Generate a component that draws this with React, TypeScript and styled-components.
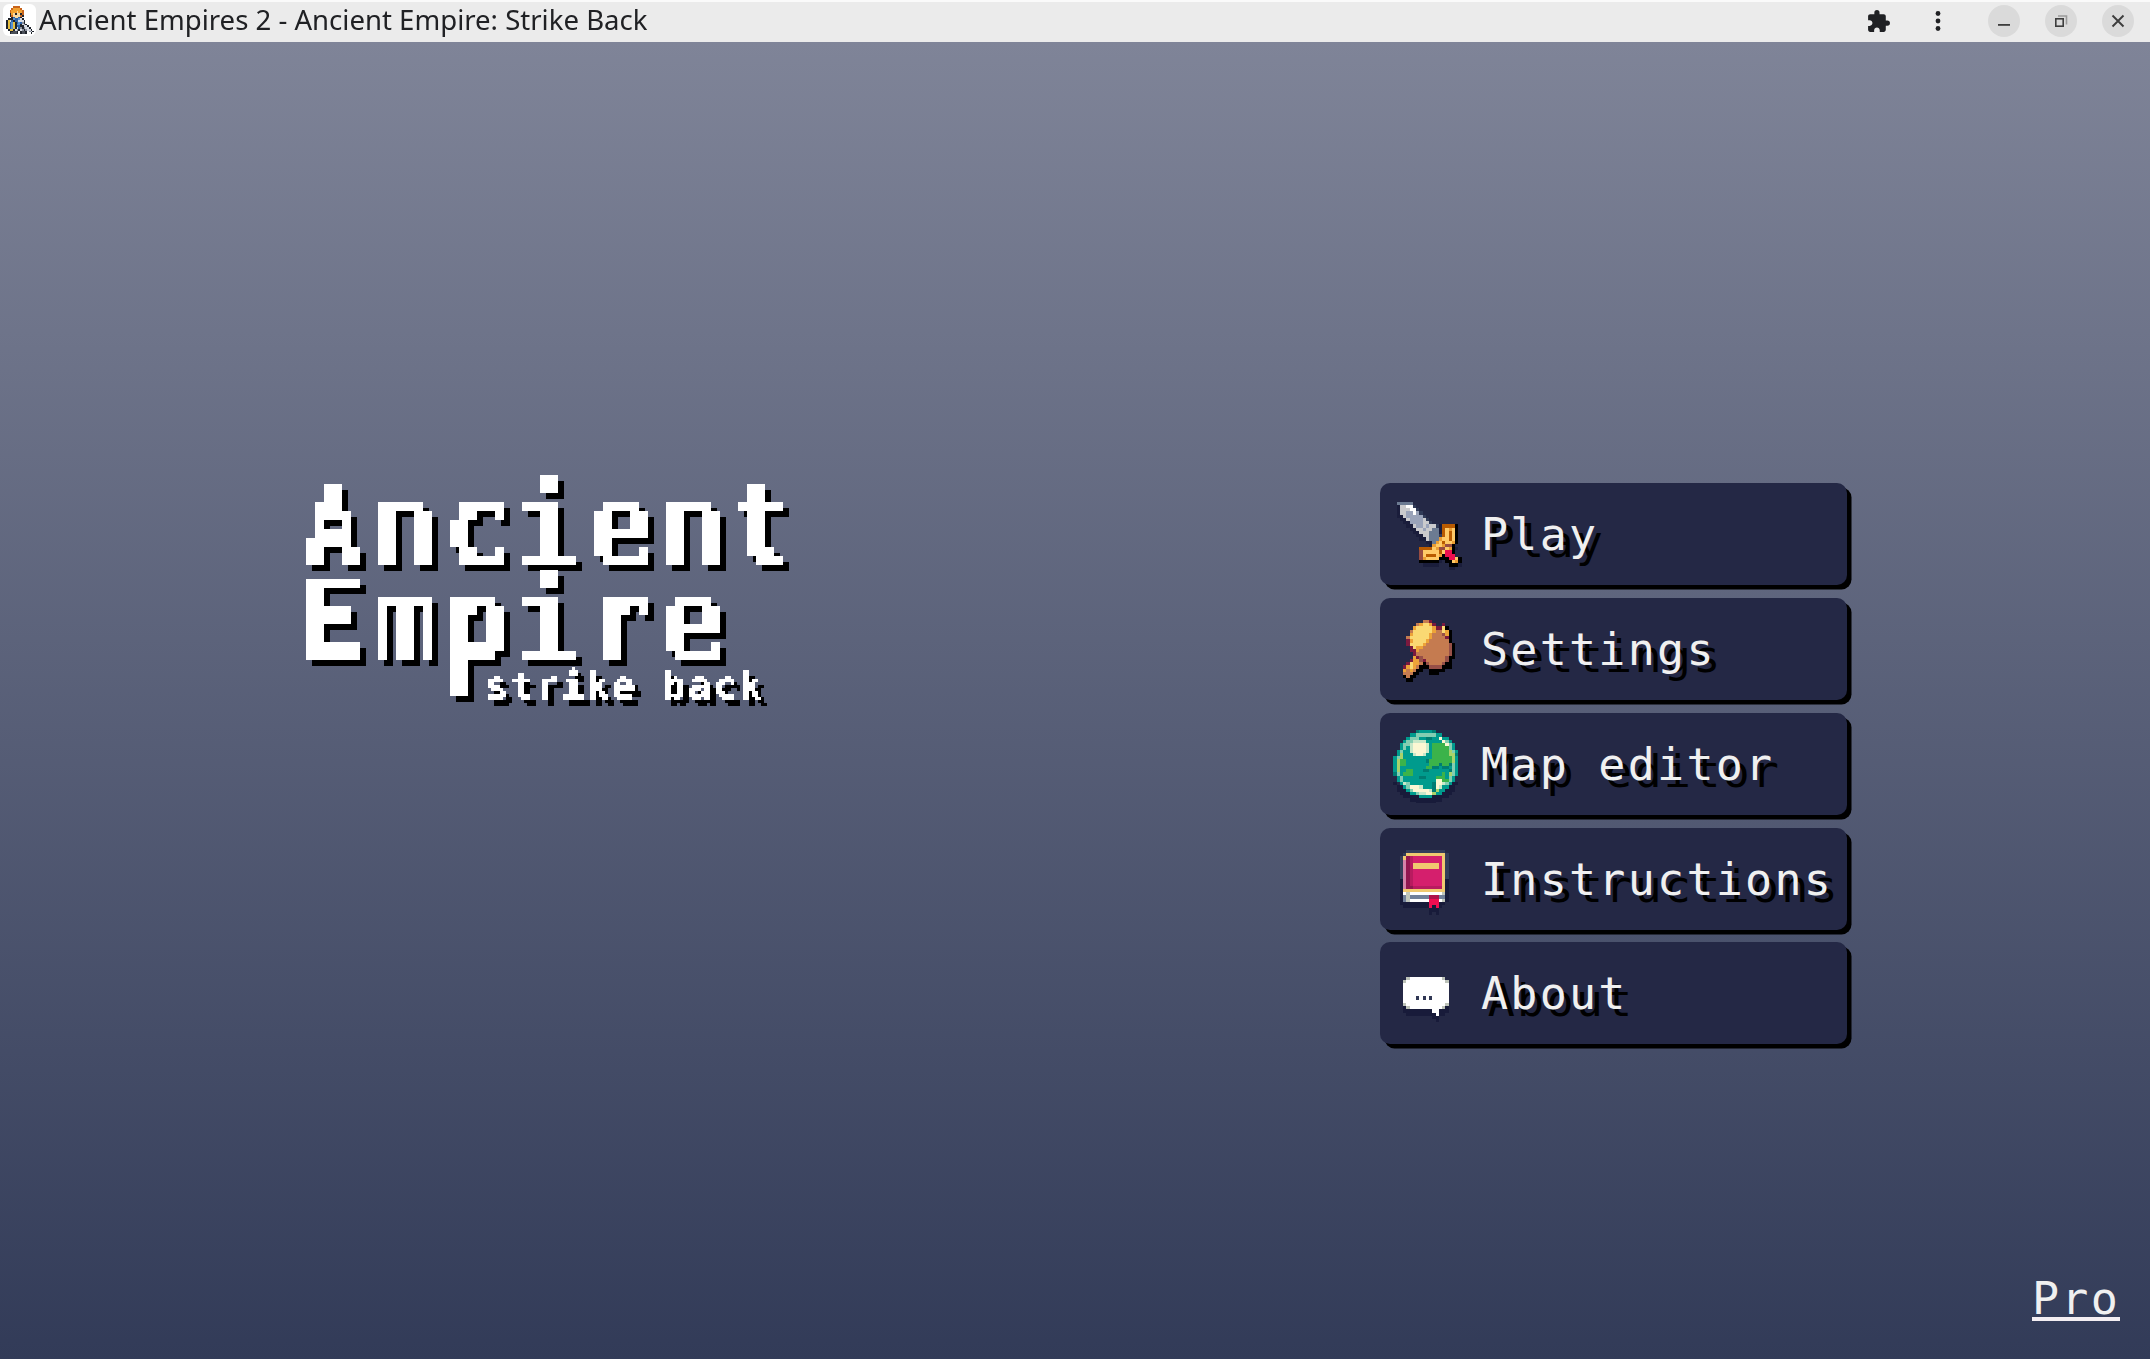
import React from "react";
import styled, { createGlobalStyle } from "styled-components";

const Global = createGlobalStyle`
  * { box-sizing: border-box; }
  html, body, #root { height: 100%; margin: 0; }
  body { overflow: hidden; }
`;

type Palette = Record<string, string>;

const Window = styled.div`
  height: 100vh;
  display: flex;
  flex-direction: column;
`;

const TitleBar = styled.header`
  flex: none;
  height: 42px;
  display: flex;
  align-items: center;
  justify-content: space-between;
  background: #ebebeb;
  border-top: 2px solid #fafafa;
  padding: 0 16px 2px 3px;
`;

const TitleGroup = styled.div`
  display: flex;
  align-items: center;
`;

const AppBadge = styled.span`
  width: 33px;
  height: 32px;
  margin-top: -2px;
  display: flex;
  justify-content: center;
  align-items: center;
  background: #fff;
  border-radius: 6px;
`;

const WindowTitle = styled.h1`
  margin: -4px 0 0 3px;
  font: 400 28px/36px "Noto Sans", sans-serif;
  color: #202124;
  white-space: nowrap;
  transform: scaleX(0.984);
  transform-origin: left center;
`;

const Controls = styled.div`
  display: flex;
  align-items: center;
`;

const ToolIcon = styled.span<{ $gap: number }>`
  width: 26px;
  height: 32px;
  margin-right: ${(p) => p.$gap}px;
  display: flex;
  align-items: center;
  justify-content: center;
  color: #202124;
`;

const RoundButton = styled.button`
  width: 32px;
  height: 32px;
  padding: 0;
  border: 0;
  border-radius: 50%;
  background: #dadada;
  display: flex;
  & + & { margin-left: 25px; }
`;

const Stage = styled.main`
  flex: 1;
  display: grid;
  grid-template-columns: 1fr 1fr;
  grid-template-rows: 1fr auto;
  background: linear-gradient(#7f8498, #323b58);
`;

const LogoCell = styled.section`
  padding: 433px 0 0 297px;
`;

const LogoLine = styled.div<{ $tailColumn?: number }>`
  position: relative;
  width: 560px;
  height: 144px;
  margin-bottom: -49px;
  padding-left: 1px;
  font: 700 113px/101.8px "DejaVu Sans Mono", monospace;
  letter-spacing: 3.97px;
  color: #fff;
  white-space: pre;
  filter: url(#blocks-large) drop-shadow(6px 6px 0 #000);

  &::after {
    content: "";
    display: ${(p) => (p.$tailColumn === undefined ? "none" : "block")};
    position: absolute;
    left: ${(p) => (p.$tailColumn ?? 0) * 9}px;
    top: 99px;
    width: 18px;
    height: 27px;
    background: #fff;
  }
`;

const NarrowCap = styled.span`
  display: inline-block;
  transform: scaleX(0.84);
`;

const LastLetter = styled.span`
  margin-left: -2.5px;
`;

const LogoTag = styled.div`
  width: 310px;
  height: 54px;
  margin: 2px 0 0 188px;
  font: 700 38px/39px "DejaVu Sans Mono", monospace;
  letter-spacing: 2.5px;
  color: #fff;
  white-space: pre;
  -webkit-text-stroke: 0.6px #fff;
  filter: url(#blocks-small) drop-shadow(6px 6px 0 #000);
`;

const Menu = styled.nav`
  padding: 441.4px 0 0 305px;
  display: flex;
  flex-direction: column;
  gap: 12.75px;
`;

const MenuButton = styled.button`
  width: 467px;
  height: 102px;
  flex: none;
  display: flex;
  align-items: center;
  padding: 0 0 0 10px;
  border: 0;
  border-radius: 10px;
  background: #242845;
  box-shadow: 4.5px 4.5px 0 #000;
  color: #f0f0f0;
  font: 400 45px/52px "DejaVu Sans Mono", monospace;
  letter-spacing: 0.05em;
  text-shadow: 0.15em 0.15em 0 #000;
  text-align: left;
`;

const MenuLabel = styled.span`
  margin-left: 13px;
  padding-top: 2px;
`;

const Footer = styled.footer`
  grid-column: 1 / -1;
  display: flex;
  justify-content: flex-end;
  padding: 0 30px 38px;
`;

const ProLink = styled.a`
  height: 49px;
  border-bottom: 4px solid #f4eef2;
  color: #f0f0f0;
  font: 400 45px/53px "DejaVu Sans Mono", monospace;
  letter-spacing: 0.05em;
`;

const HiddenDefs = styled.svg`
  position: absolute;
  width: 0;
  height: 0;
`;

const PixelSvg = styled.svg`
  flex: none;
  display: block;
`;

interface SpriteProps {
  rows: string[];
  palette: Palette;
  x: number;
  y: number;
  size?: number;
  box?: number;
}

function Sprite({ rows, palette, x, y, size = 78, box = 24 }: SpriteProps) {
  const cells: React.ReactNode[] = [];
  rows.forEach((row, r) => {
    let c = 0;
    while (c < row.length) {
      const k = row[c];
      let e = c + 1;
      while (row[e] === k) e++;
      if (k !== "." && palette[k]) {
        cells.push(<rect key={`${r}-${c}`} x={x + c} y={y + r} width={e - c} height={1} fill={palette[k]} />);
      }
      c = e;
    }
  });
  return (
    <PixelSvg width={size} height={size} viewBox={`0 0 ${box} ${box}`} shapeRendering="crispEdges">
      {cells}
    </PixelSvg>
  );
}

const swordColors: Palette = {
  s: "#6c7b92", l: "#cbcbcd", g: "#9aa3b9", w: "#ffffff", d: "#303b57", k: "#000000",
  n: "#1a1d3b", O: "#b95b00", o: "#eb9d33", y: "#ffca68", m: "#984c42", r: "#ed0f4f",
};
const sword = [
  "sssss...............",
  "nllwwd..............",
  "nlllwwd.............",
  "nllggwgd............",
  "nnlgggggd...........",
  ".nnlggggld..........",
  "..nngggglld.........",
  "...nnlgglglldnOOOOk.",
  "....nnllgllssnOyoyk.",
  ".....nnlllsssnOyOyk.",
  "......nnllsssdOyOyk.",
  ".......nnlsssoyyOyk.",
  ".........nnsoyOyyok.",
  "..........noyyommk..",
  ".......OOOOyommyokn.",
  ".......myyyyyOyrrk..",
  ".......myOOOyokrrr..",
  ".......moyyyykkkrryk",
  ".......kkkkkkn.kkyok",
  "........nnnnn...kkkn",
  "................nn..",
];

const hammerColors: Palette = {
  y: "#fad973", o: "#eda338", b: "#c57b50", m: "#7b1a3e", r: "#975048", k: "#000000",
};
const hammer = [
  "......bbm.......",
  "....boyyom..m...",
  "...oyyyyyommyk..",
  "..byyyyyyobbyok.",
  "..oyyyyyobbbrok.",
  ".byyyyyyobbbbmk.",
  ".moyyyyobbbbbbk.",
  ".myyyyobbbbbbbrk",
  "..myoobbbbbbbbrk",
  "..mmobbbbbbbbbrk",
  "...mbbbbbbbbbbrk",
  "...omrbbbbbbbrkk",
  "..moormbbbbbbrk.",
  ".myoobkrbbbbrkk.",
  "moyobkkkrrrrkkk.",
  "obobkk..kkkkk...",
  "bbbkk...kkk.....",
  "kbkk............",
  ".kk.............",
];

const globeColors: Palette = {
  t: "#009b8d", T: "#007c72", g: "#3bb34a", l: "#83ceb2", c: "#c8e8c9",
  w: "#fbf7d3", y: "#aad36a", k: "#181b3a",
};
const globe = [
  ".......TttttT.......",
  ".....ttlllllltt.....",
  "....tlllttTTttwtt...",
  "...tllcccctttttwlt..",
  "..tllcwwwwctggggwlt.",
  "..tltcwwwwctggggglt.",
  ".tlttcwwwwctgggggylt",
  ".tytttcwwcttgggggyyT",
  "tlytttttttttggggggyt",
  "tyggttttttTgggggggyt",
  "tyggtttttttgggTggTlt",
  "tyttttttttggTTtTTtlt",
  "tyttggtttTTttttttTlt",
  "Tltgggtttttttttgtylt",
  ".tltttttTTtttgggtlt.",
  ".tlttttttttttwwgglt.",
  "k.tcltttttttTwwcltkk",
  ".kktlwwwctttTwcttkk.",
  ".kkktlwwwwwcTyttkkk.",
  "..kkkttlccwwyttkkk..",
  "...kkkkkttttkkkkk...",
  ".....kkkkkkkkkk.....",
  ".......kkkkkk.......",
];

const bookColors: Palette = {
  n: "#343d59", k: "#181b3a", y: "#f1c970", D: "#911650", d: "#b81b5f", p: "#d51f6d",
  q: "#d582a9", w: "#ffffff", l: "#c1c7bc", s: "#71809a", R: "#ad124a", r: "#f00d50",
};
const book = [
  "..nnnnnnnnnnnn.",
  ".nyyyyyyyyyyyyn",
  "nyDdpppppppppyn",
  "nqDdpppppppppyn",
  "nqDdyyyyyyyypyn",
  "nqDdyyyyyyyypyn",
  "nqDdpppppppppyn",
  "nqDdpppppppppyn",
  "nqDdpppppppppyn",
  "kqDdpppppppppyk",
  "kqDdpppppppppyk",
  "kqDDdddddddddyk",
  "kyyyyyyyyyyyyyk",
  "kwlwwwwwwwwwwlk",
  "kslssssssRRRssk",
  "kslwwwwwwrrrwlk",
  "kkkkkkkkkrrrkk.",
  ".kkkkkkkkrkrk..",
  ".........kkk...",
  ".........k.k...",
];

const bubbleColors: Palette = { w: "#ffffff", l: "#bdc3b9", n: "#303754", k: "#181b3a" };
const bubble = [
  ".lwwwwwwwwwwl.",
  "lwwwwwwwwwwwwl",
  "wwwwwwwwwwwwww",
  "wwwwwwwwwwwwww",
  "wwwwwwwwwwwwww",
  "wwwwwwwwwwwwww",
  "wwwwnwnwnwwwww",
  "wwwwwwwwwwwwww",
  "lwwwwwwwwwwwwl",
  "klwwwwwwwwwwlk",
  "kkkkkkkkkwwkkk",
  ".kkkkkkkkkwkk.",
  ".........kk...",
  "..........k...",
];

const knightColors: Palette = {
  h: "#c8641c", H: "#f0a030", f: "#f8d8a0", k: "#20242c", b: "#2c62a8", B: "#5b92d0",
  w: "#d8dce4", g: "#8a8f9c", y: "#e8c040", s: "#4a4f58",
};
const knight = [
  "....hhhh........",
  "...hHHHHh.......",
  "..hHHHHHHh......",
  "..hHHHfHHh......",
  "..kHfkffkh......",
  "..khffffhk......",
  "...kbffbk.......",
  ".kkkBbbBwk......",
  "kywbkbbwwwk.....",
  "kybBykbBbgk.....",
  "kybBykBBkwgk....",
  "kybBykbbkkwwk...",
  "kybBykwbgkgwwk..",
  ".kyykwgkwgkgwwk.",
  "..kkssk.kssk.gwk",
  "..ksssk.kssk..k.",
];

const entries = [
  { label: "Play", rows: sword, palette: swordColors, x: 2, y: 2 },
  { label: "Settings", rows: hammer, palette: hammerColors, x: 4, y: 3 },
  { label: "Map editor", rows: globe, palette: globeColors, x: 1, y: 1.6 },
  { label: "Instructions", rows: book, palette: bookColors, x: 3, y: 3 },
  { label: "About", rows: bubble, palette: bubbleColors, x: 4, y: 7 },
];

interface BlockFilterProps {
  id: string;
  cell: number;
}

function BlockFilter({ id, cell }: BlockFilterProps) {
  const mid = (cell - 1) / 2;
  return (
    <filter id={id} x="0" y="0" width="1" height="1" primitiveUnits="userSpaceOnUse" colorInterpolationFilters="sRGB">
      <feFlood x={mid} y={mid} width={1} height={1} floodColor="#fff" result="dot" />
      <feComposite in="dot" in2="dot" operator="over" x={0} y={0} width={cell} height={cell} />
      <feTile result="grid" />
      <feComposite in="SourceGraphic" in2="grid" operator="in" />
      <feComponentTransfer>
        <feFuncA type="discrete" tableValues="0 1" />
      </feComponentTransfer>
      <feMorphology operator="dilate" radius={mid} />
    </filter>
  );
}

export default function App() {
  return (
    <Window>
      <Global />
      <HiddenDefs aria-hidden="true">
        <defs>
          <BlockFilter id="blocks-large" cell={9} />
          <BlockFilter id="blocks-small" cell={3} />
        </defs>
      </HiddenDefs>
      <TitleBar>
        <TitleGroup>
          <AppBadge>
            <Sprite rows={knight} palette={knightColors} x={0} y={0} size={28} box={16} />
          </AppBadge>
          <WindowTitle>Ancient Empires 2 - Ancient Empire: Strike Back</WindowTitle>
        </TitleGroup>
        <Controls>
          <ToolIcon $gap={34}>
            <svg width="25" height="25" viewBox="0 0 24 24" fill="currentColor">
              <path d="M20.5 11H19V7c0-1.1-.9-2-2-2h-4V3.500a2.500 2.500 0 0 0-5 0V5H4c-1.100 0-1.990.9-1.990 2v3.800H3.500c1.490 0 2.700 1.210 2.700 2.700s-1.210 2.700-2.700 2.700H2V20c0 1.100.9 2 2 2h3.800v-1.500c0-1.490 1.210-2.700 2.700-2.700s2.700 1.210 2.700 2.700V22H17c1.100 0 2-.9 2-2v-4h1.500a2.500 2.500 0 0 0 0-5z" />
            </svg>
          </ToolIcon>
          <ToolIcon $gap={37}>
            <svg width="6" height="22" viewBox="0 0 6 22" fill="currentColor">
              <circle cx="3" cy="3.500" r="2.400" />
              <circle cx="3" cy="11" r="2.400" />
              <circle cx="3" cy="18.500" r="2.400" />
            </svg>
          </ToolIcon>
          <RoundButton aria-label="Minimize">
            <svg width="32" height="32" fill="#3d3d3d">
              <rect x="10" y="19" width="12" height="1.800" />
            </svg>
          </RoundButton>
          <RoundButton aria-label="Restore">
            <svg width="32" height="32" fill="none" strokeWidth="1.600">
              <path d="M13 11h8.500v8.500" stroke="#9a9a9a" />
              <rect x="10.800" y="13.800" width="7.400" height="7.400" stroke="#3d3d3d" />
            </svg>
          </RoundButton>
          <RoundButton aria-label="Close">
            <svg width="32" height="32" fill="none" stroke="#3d3d3d" strokeWidth="1.900">
              <path d="M10.500 10.500l11 11M21.500 10.500l-11 11" />
            </svg>
          </RoundButton>
        </Controls>
      </TitleBar>
      <Stage>
        <LogoCell>
          <LogoLine>
            <NarrowCap>A</NarrowCap>ncien<LastLetter>t</LastLetter>
          </LogoLine>
          <LogoLine $tailColumn={17}>Empire</LogoLine>
          <LogoTag>strike back</LogoTag>
        </LogoCell>
        <Menu>
          {entries.map((e) => (
            <MenuButton key={e.label}>
              <Sprite rows={e.rows} palette={e.palette} x={e.x} y={e.y} />
              <MenuLabel>{e.label}</MenuLabel>
            </MenuButton>
          ))}
        </Menu>
        <Footer>
          <ProLink>Pro</ProLink>
        </Footer>
      </Stage>
    </Window>
  );
}
